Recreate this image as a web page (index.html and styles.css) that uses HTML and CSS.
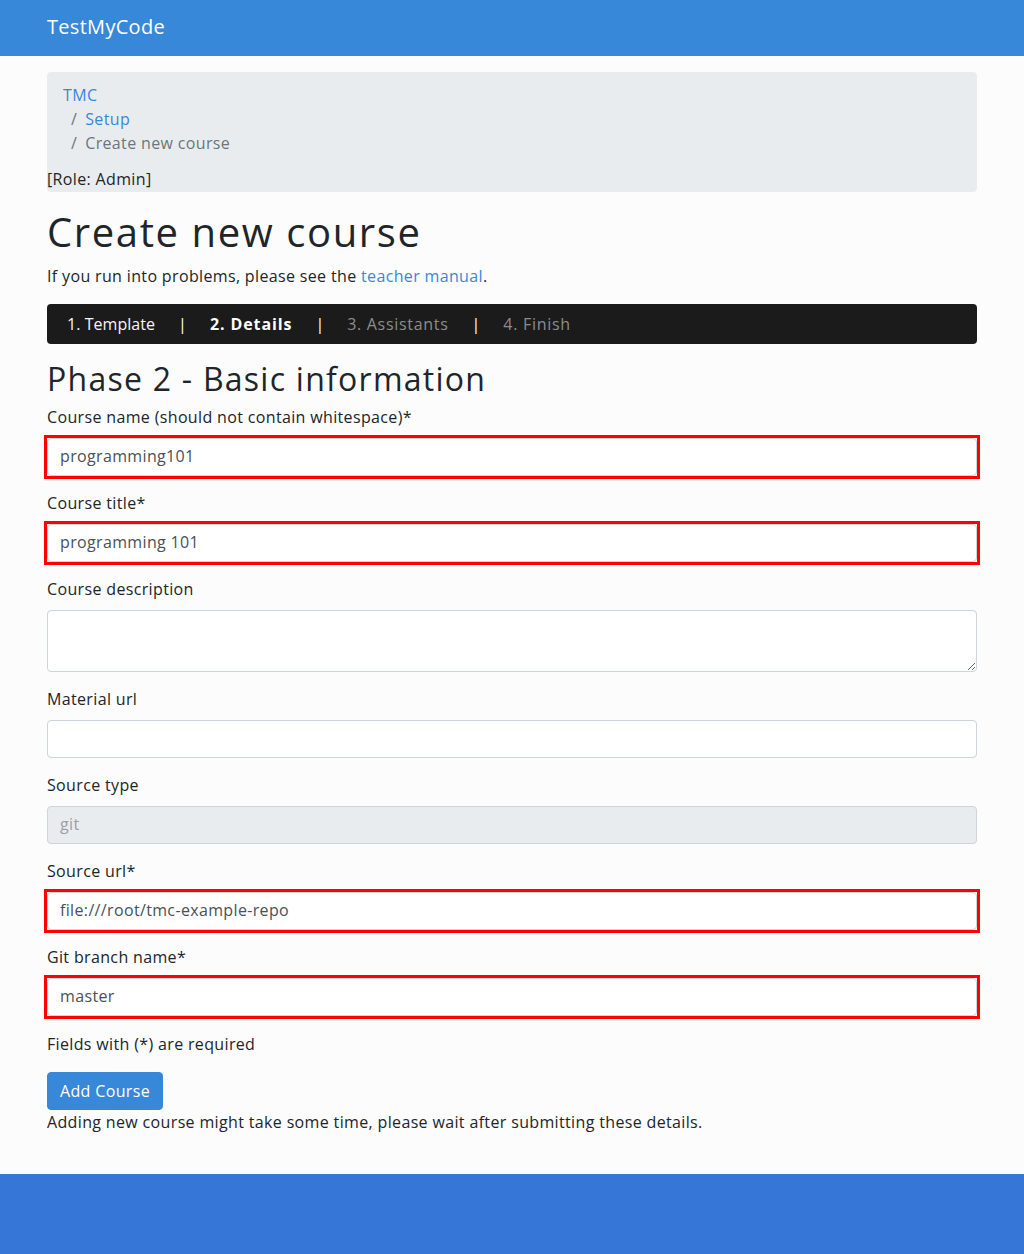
FILE: index.html
```html
<!DOCTYPE html>
<html lang="en">
<head>
<meta charset="utf-8">
<title>Create new course - TestMyCode</title>
<link rel="stylesheet" href="styles.css">
</head>
<body>
<header class="navbar">
  <div class="container">
    <a class="brand" href="#">TestMyCode</a>
  </div>
</header>
<main class="container main">
  <div class="crumb-wrap">
    <ol class="breadcrumb">
      <li class="crumb"><a href="#">TMC</a></li>
      <li class="crumb"><a href="#">Setup</a></li>
      <li class="crumb active">Create new course</li>
    </ol>
    <span class="role">[Role: Admin]</span>
  </div>

  <h1 class="title">Create new course</h1>
  <p>If you run into problems, please see the <a href="#">teacher manual</a>.</p>

  <nav class="phases">
    <span class="phase done">1. Template</span>
    <span class="sep">|</span>
    <span class="phase current">2. Details</span>
    <span class="sep">|</span>
    <span class="phase todo">3. Assistants</span>
    <span class="sep">|</span>
    <span class="phase todo">4. Finish</span>
  </nav>

  <h2 class="subtitle">Phase 2 - Basic information</h2>

  <form class="form">
    <div class="group">
      <label class="label">Course name (should not contain whitespace)*</label>
      <div class="invalid"><input class="input" type="text" value="programming101"></div>
    </div>
    <div class="group">
      <label class="label">Course title*</label>
      <div class="invalid"><input class="input" type="text" value="programming 101"></div>
    </div>
    <div class="group">
      <label class="label">Course description</label>
      <textarea class="input textarea" rows="2"></textarea>
    </div>
    <div class="group">
      <label class="label">Material url</label>
      <input class="input" type="text" value="">
    </div>
    <div class="group">
      <label class="label">Source type</label>
      <input class="input" type="text" value="git" disabled>
    </div>
    <div class="group">
      <label class="label">Source url*</label>
      <div class="invalid"><input class="input" type="text" value="file:///root/tmc-example-repo"></div>
    </div>
    <div class="group">
      <label class="label">Git branch name*</label>
      <div class="invalid"><input class="input" type="text" value="master"></div>
    </div>
    <p>Fields with (*) are required</p>
    <button class="btn" type="button">Add Course</button>
    <p class="note">Adding new course might take some time, please wait after submitting these details.</p>
  </form>
</main>
<footer class="footer"></footer>
</body>
</html>
```

FILE: styles.css
```css
* { box-sizing: border-box; }
html, body { margin: 0; padding: 0; }
body {
  font-family: "Open Sans", "Noto Sans", sans-serif;
  font-size: 16px;
  line-height: 1.5;
  letter-spacing: 0.35px;
  color: #212529;
  background: #fcfcfc;
}
a { color: #3788d8; text-decoration: none; }
p { margin: 0 0 16px; }

.container {
  width: 960px;
  margin: 0 auto;
  padding: 0 15px;
}

.navbar {
  background: #3788d8;
  padding: 8px 0;
}
.brand {
  display: inline-block;
  color: #fff;
  font-size: 20px;
  line-height: 30px;
  padding: 4px 0 6px;
  letter-spacing: 0.3px;
}

.main { padding-top: 16px; padding-bottom: 24px; }

.crumb-wrap {
  background: #e9ecef;
  border-radius: 4px;
  margin-bottom: 16px;
}
.breadcrumb {
  list-style: none;
  margin: 0;
  padding: 11px 16px 13px;
}
.crumb + .crumb { padding-left: 8px; }
.crumb + .crumb::before {
  content: "/";
  color: #6c757d;
  padding-right: 8px;
}
.crumb.active { color: #6c757d; }
.role { display: block; line-height: 23px; padding-bottom: 1px; }

.title {
  font-size: 40px;
  font-weight: 500;
  line-height: 1.2;
  letter-spacing: 1.6px;
  margin: 0 0 8px;
}

.phases {
  display: flex;
  align-items: center;
  height: 40px;
  background: #1b1b1b;
  border-radius: 4px;
  padding: 0 20px 1px;
  margin-bottom: 16px;
  color: #fff;
}
.sep { margin: 0 23px; color: #fff; letter-spacing: 0; }
.phase.done { color: #f5f5f5; letter-spacing: 0.05px; }
.phase.current { font-weight: 700; color: #fff; letter-spacing: 0.9px; }
.phase.todo { color: #8d8d8d; letter-spacing: 0.7px; }

.subtitle {
  font-size: 32px;
  font-weight: 500;
  line-height: 1.2;
  letter-spacing: 1.25px;
  margin: 0 0 8px;
}

.group { margin-bottom: 16px; }
.label { display: block; margin-bottom: 8px; line-height: 23px; padding-bottom: 1px; }
.input {
  display: block;
  width: 100%;
  height: 38px;
  padding: 5px 12px 7px;
  font: inherit;
  letter-spacing: inherit;
  color: #495057;
  background: #fff;
  border: 1px solid #ced4da;
  border-radius: 4px;
}
.input:disabled { background: #e9ecef; color: #9aa0a6; }
.textarea { height: 62px; resize: vertical; }
.invalid { outline: 3px solid #ff0000; }

.btn {
  display: inline-block;
  font: inherit;
  letter-spacing: inherit;
  color: #fff;
  background: #3788d8;
  border: 1px solid #3788d8;
  border-radius: 4px;
  padding: 6px 12px;
  line-height: 24px;
}
.note { margin-bottom: 16px; }

.footer {
  background: #3676d6;
  height: 80px;
}
```
